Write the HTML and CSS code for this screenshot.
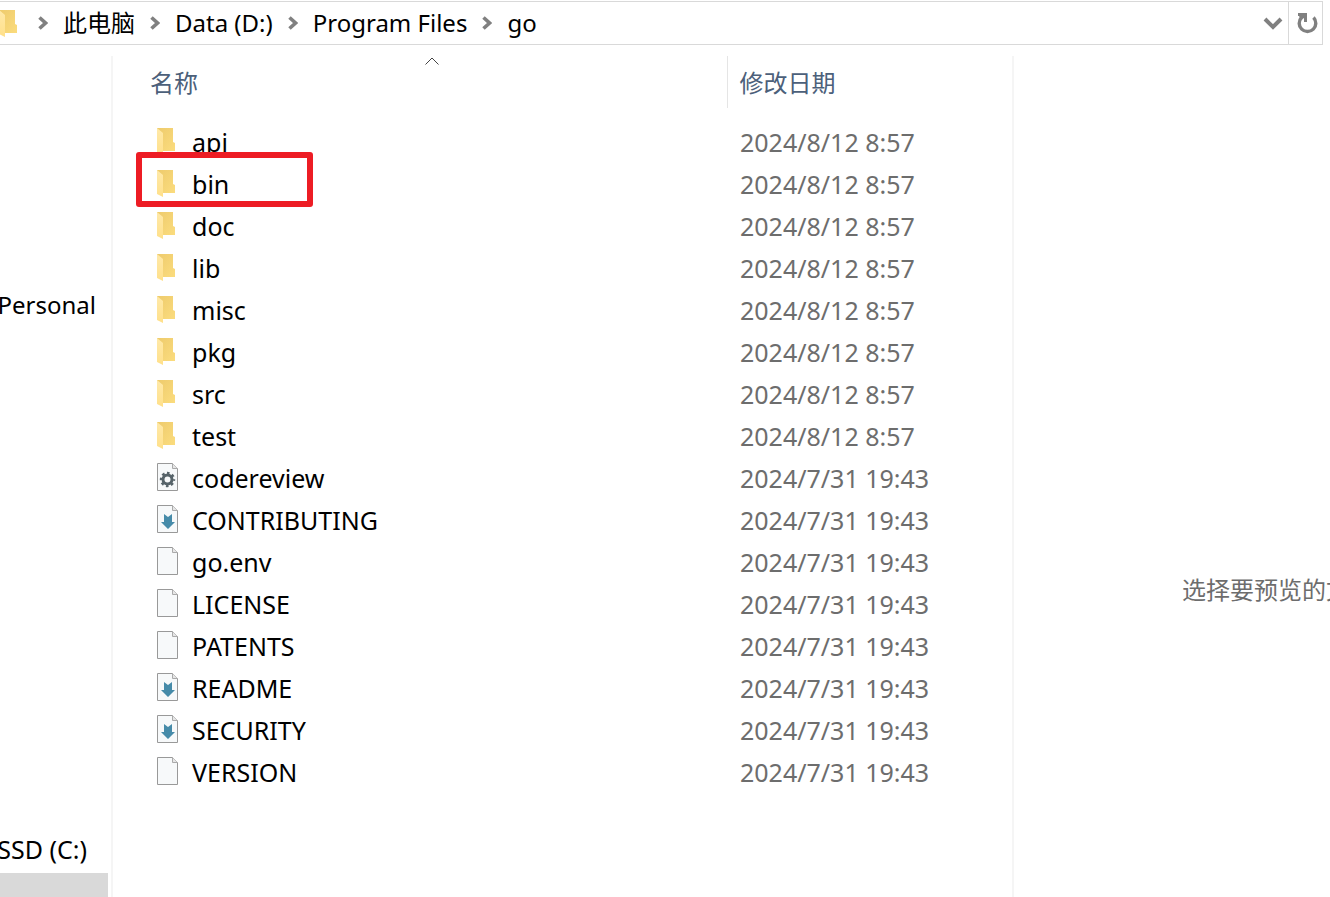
FILE: index.html
```html
<!DOCTYPE html>
<html lang="zh-CN">
<head>
<meta charset="utf-8">
<title>go</title>
<link rel="stylesheet" href="styles.css">
</head>
<body>
<svg class="defs" aria-hidden="true">
  <defs>
    <linearGradient id="front" x1="0" y1="0" x2="0" y2="1"><stop offset="0" stop-color="#ffe9a9"/><stop offset="1" stop-color="#ffe08a"/></linearGradient>
    <linearGradient id="back" x1="0" y1="0" x2="1" y2="1"><stop offset="0" stop-color="#eecb6c"/><stop offset="1" stop-color="#fbdc7e"/></linearGradient>
    <symbol id="folder" viewBox="0 0 22 28">
      <path d="M0 1H16V15L18 16V24H0z" fill="url(#back)"/>
      <path d="M0 1L6 6V28L0 25z" fill="url(#front)"/>
    </symbol>
    <symbol id="page" viewBox="0 0 22 28">
      <path d="M.5 .5H15.500L20.500 5.500V27.500H.5z" fill="#f7f9fa" stroke="#999"/>
      <path d="M15.500 .5V5.500H20.500" fill="#e6e6e6" stroke="#aaa"/>
    </symbol>
    <symbol id="config" viewBox="0 0 22 28">
      <use href="#page"/>
      <circle cx="10.500" cy="16.500" r="4.500" fill="none" stroke="#566369" stroke-width="3"/>
      <circle cx="10.500" cy="16.500" r="6.500" fill="none" stroke="#566369" stroke-width="2.400" stroke-dasharray="2.600 2.505" stroke-dashoffset="1.300"/>
    </symbol>
    <symbol id="markdown" viewBox="0 0 22 28">
      <use href="#page"/>
      <path d="M7 9L11 12L15 9V17H18L11 24L4 17H7z" fill="#468ba9"/>
    </symbol>
    <symbol id="chevron" viewBox="0 0 10 14"><path d="M1.500 1.500L7.500 7L1.500 12.500" fill="none" stroke="#808080" stroke-width="3.600"/></symbol>
  </defs>
</svg>
<header class="address">
  <svg class="icon address-folder"><use href="#folder"/></svg>
  <nav class="crumbs" aria-label="路径">
    <svg class="chevron"><use href="#chevron"/></svg>
    <a class="crumb" href="#pc">此电脑</a>
    <svg class="chevron"><use href="#chevron"/></svg>
    <a class="crumb" href="#data">Data (D:)</a>
    <svg class="chevron"><use href="#chevron"/></svg>
    <a class="crumb" href="#programs">Program Files</a>
    <svg class="chevron"><use href="#chevron"/></svg>
    <a class="crumb" href="#go">go</a>
  </nav>
  <button class="history" aria-label="历史"><svg width="20" height="14" viewBox="0 0 20 14"><path d="M2 3L10 11L18 3" fill="none" stroke="#808080" stroke-width="4"/></svg></button>
  <button class="refresh" aria-label="刷新"><svg width="22" height="22" viewBox="0 0 22 22"><path d="M5.500 5.500A8.300 8.300 0 1 0 17.500 5.500" fill="none" stroke="#808080" stroke-width="3.400"/><path d="M2 1H11V10H8V6L5 8L3 4H2z" fill="#808080"/></svg></button>
</header>
<main class="explorer">
  <nav class="sidebar" aria-label="导航">
    <a class="place personal" href="#personal">Personal</a>
    <a class="place ssd" href="#c">SSD (C:)</a>
    <div class="selected-place"></div>
  </nav>
  <section class="files">
    <table class="list">
      <thead>
        <tr>
          <th class="name-head" scope="col">名称<svg class="sort" viewBox="0 0 14 8"><path d="M.5 7.500L7 1L13.500 7.500" fill="none" stroke="#444"/></svg></th>
          <th class="date-head" scope="col">修改日期</th>
        </tr>
      </thead>
      <tbody>
        <tr><td><div class="file"><svg class="icon"><use href="#folder"/></svg>api</div></td><td class="date">2024/8/12 8:57</td></tr>
        <tr><td><div class="file marked"><svg class="icon"><use href="#folder"/></svg>bin</div></td><td class="date">2024/8/12 8:57</td></tr>
        <tr><td><div class="file"><svg class="icon"><use href="#folder"/></svg>doc</div></td><td class="date">2024/8/12 8:57</td></tr>
        <tr><td><div class="file"><svg class="icon"><use href="#folder"/></svg>lib</div></td><td class="date">2024/8/12 8:57</td></tr>
        <tr><td><div class="file"><svg class="icon"><use href="#folder"/></svg>misc</div></td><td class="date">2024/8/12 8:57</td></tr>
        <tr><td><div class="file"><svg class="icon"><use href="#folder"/></svg>pkg</div></td><td class="date">2024/8/12 8:57</td></tr>
        <tr><td><div class="file"><svg class="icon"><use href="#folder"/></svg>src</div></td><td class="date">2024/8/12 8:57</td></tr>
        <tr><td><div class="file"><svg class="icon"><use href="#folder"/></svg>test</div></td><td class="date">2024/8/12 8:57</td></tr>
        <tr><td><div class="file"><svg class="icon"><use href="#config"/></svg>codereview</div></td><td class="date">2024/7/31 19:43</td></tr>
        <tr><td><div class="file"><svg class="icon"><use href="#markdown"/></svg>CONTRIBUTING</div></td><td class="date">2024/7/31 19:43</td></tr>
        <tr><td><div class="file"><svg class="icon"><use href="#page"/></svg>go.env</div></td><td class="date">2024/7/31 19:43</td></tr>
        <tr><td><div class="file"><svg class="icon"><use href="#page"/></svg>LICENSE</div></td><td class="date">2024/7/31 19:43</td></tr>
        <tr><td><div class="file"><svg class="icon"><use href="#page"/></svg>PATENTS</div></td><td class="date">2024/7/31 19:43</td></tr>
        <tr><td><div class="file"><svg class="icon"><use href="#markdown"/></svg>README</div></td><td class="date">2024/7/31 19:43</td></tr>
        <tr><td><div class="file"><svg class="icon"><use href="#markdown"/></svg>SECURITY</div></td><td class="date">2024/7/31 19:43</td></tr>
        <tr><td><div class="file"><svg class="icon"><use href="#page"/></svg>VERSION</div></td><td class="date">2024/7/31 19:43</td></tr>
      </tbody>
    </table>
  </section>
  <aside class="preview">选择要预览的文件。</aside>
</main>
</body>
</html>
```
FILE: styles.css
```css
*, *::before, *::after { box-sizing: border-box; }
body {
  margin: 0;
  min-height: 100vh;
  display: flex;
  flex-direction: column;
  overflow: hidden;
  background: #fff;
  color: #000;
  font: 24px/42px "Noto Sans", "Noto Sans CJK SC", sans-serif;
}
a { color: inherit; text-decoration: none; }
button { padding: 0; border: 0; background: none; }
.defs { position: absolute; width: 0; height: 0; }
.icon { width: 22px; height: 28px; flex: none; }
.address {
  display: flex;
  align-items: center;
  height: 44px;
  margin: 1px 7px 11px 0;
  border: 1px solid #d9d9d9;
  border-left: 0;
}
.address-folder { margin-left: -1px; }
.crumbs { display: flex; align-items: center; flex: 1; padding-left: 17px; gap: 15px; white-space: nowrap; }
.chevron { width: 10px; height: 14px; flex: none; }
.history { display: flex; align-items: center; justify-content: center; width: 30px; height: 42px; }
.refresh { display: flex; align-items: center; justify-content: center; width: 34px; height: 42px; padding-left: 2px; border-left: 1px solid #d9d9d9; }
.explorer { flex: 1; display: grid; grid-template-columns: 113px 901px 1fr; }
.sidebar {
  display: flex;
  flex-direction: column;
  padding-top: 225px;
  border-right: 2px solid #f5f5f5;
  overflow: hidden;
}
.place { display: flex; justify-content: flex-end; line-height: 48px; white-space: nowrap; }
.personal { padding-right: 15px; }
.ssd { margin-top: 496px; padding-right: 24px; font-size: 25px; }
.selected-place { flex: 1; min-height: 24px; margin-right: 3px; background: #d9d9d9; }
.files { border-right: 2px solid #f5f5f5; }
.list { width: 100%; border-collapse: collapse; table-layout: fixed; }
.list th, .list td { padding: 0; text-align: left; font-weight: 400; }
.list th { height: 52px; padding-top: 2px; color: #4c607a; }
.list .name-head { position: relative; width: 614px; padding-left: 37px; }
.list .date-head { padding-left: 12px; border-left: 1px solid #e5e5e5; }
.sort { position: absolute; left: 312px; top: 1px; width: 14px; height: 8px; }
.list tbody { font-size: 25px; }
.list tbody::before { content: ""; display: block; height: 13px; }
.file { position: relative; display: flex; align-items: center; gap: 13px; height: 42px; padding-left: 44px; }
.file .icon { margin-bottom: 2px; }
.marked::after {
  content: "";
  position: absolute;
  z-index: 1;
  left: 23px;
  top: -11px;
  width: 177px;
  height: 55px;
  border: 6px solid #ed1c24;
  border-radius: 3px;
}
.list .date { padding-left: 13px; color: #6d6d6d; }
.preview { padding: 513px 0 0 168px; overflow: hidden; color: #6d6d6d; white-space: nowrap; }
```
